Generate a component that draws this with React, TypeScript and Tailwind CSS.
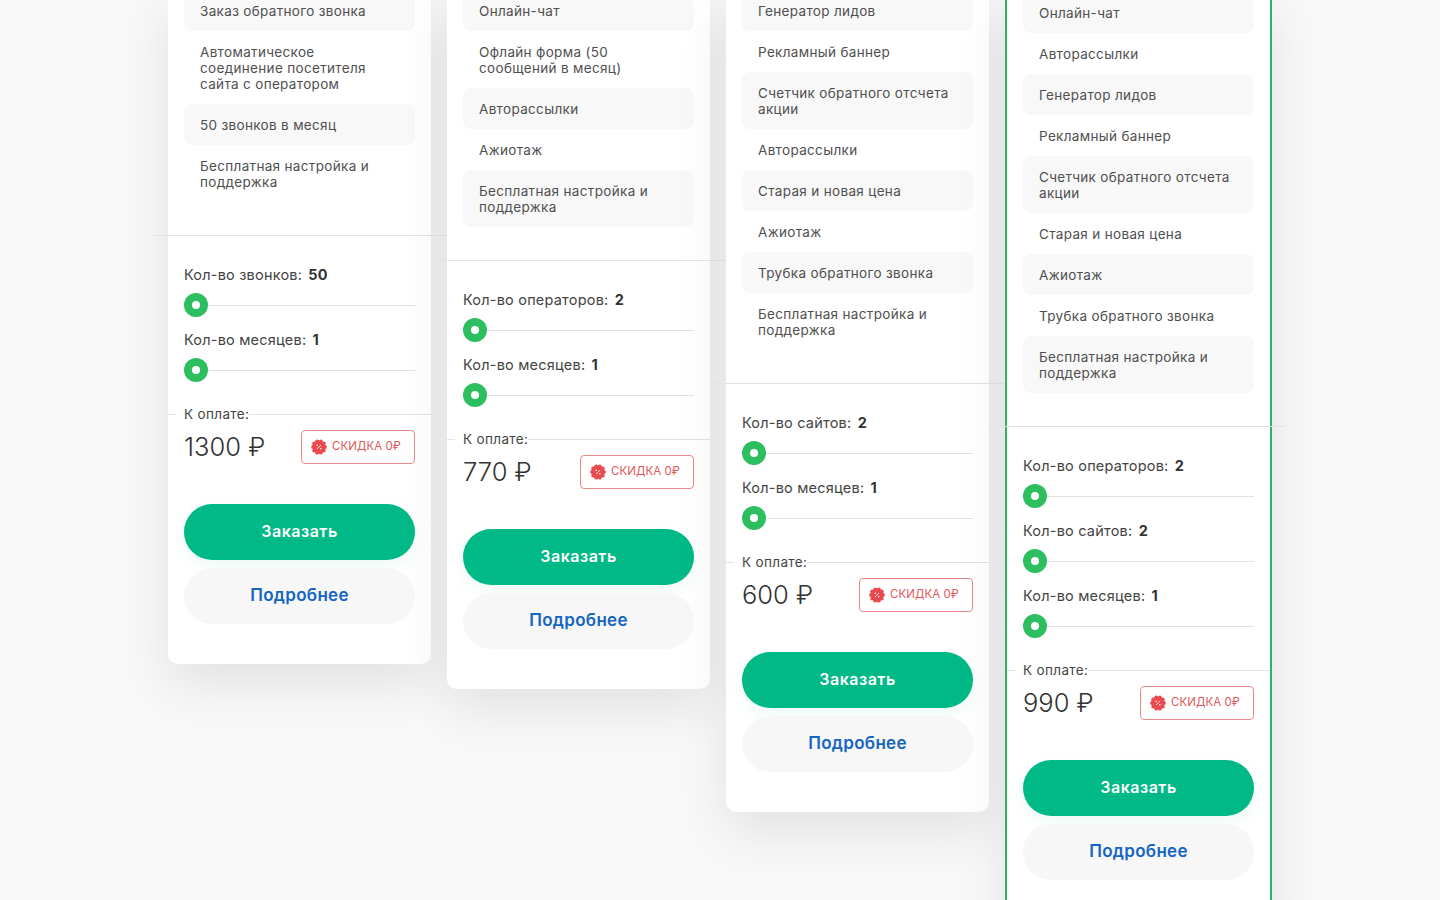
import React from "react";

type Plan = {
  items: string[];
  sliders: [string, string][];
  price: string;
  featured?: boolean;
};

const plans: Plan[] = [
  {
    items: [
      "Заказ обратного звонка",
      "Автоматическое\nсоединение посетителя\nсайта с оператором",
      "50 звонков в месяц",
      "Бесплатная настройка и\nподдержка",
    ],
    sliders: [["Кол-во звонков:", "50"], ["Кол-во месяцев:", "1"]],
    price: "1300 ₽",
  },
  {
    items: [
      "Онлайн-чат",
      "Офлайн форма (50\nсообщений в месяц)",
      "Авторассылки",
      "Ажиотаж",
      "Бесплатная настройка и\nподдержка",
    ],
    sliders: [["Кол-во операторов:", "2"], ["Кол-во месяцев:", "1"]],
    price: "770 ₽",
  },
  {
    items: [
      "Генератор лидов",
      "Рекламный баннер",
      "Счетчик обратного отсчета\nакции",
      "Авторассылки",
      "Старая и новая цена",
      "Ажиотаж",
      "Трубка обратного звонка",
      "Бесплатная настройка и\nподдержка",
    ],
    sliders: [["Кол-во сайтов:", "2"], ["Кол-во месяцев:", "1"]],
    price: "600 ₽",
  },
  {
    items: [
      "Онлайн-чат",
      "Авторассылки",
      "Генератор лидов",
      "Рекламный баннер",
      "Счетчик обратного отсчета\nакции",
      "Старая и новая цена",
      "Ажиотаж",
      "Трубка обратного звонка",
      "Бесплатная настройка и\nподдержка",
    ],
    sliders: [["Кол-во операторов:", "2"], ["Кол-во сайтов:", "2"], ["Кол-во месяцев:", "1"]],
    price: "990 ₽",
    featured: true,
  },
];

function DiscountIcon() {
  const bumps = Array.from({ length: 10 }, (_, i) => {
    const a = (i / 10) * Math.PI * 2;
    return { x: 8 + Math.cos(a) * 6, y: 8 + Math.sin(a) * 6 };
  });
  return (
    <svg width="16" height="16" viewBox="0 0 16 16" className="shrink-0">
      <circle cx="8" cy="8" r="6.4" fill="#ea4a4f" />
      {bumps.map((b, i) => (
        <circle key={i} cx={b.x} cy={b.y} r="1.9" fill="#ea4a4f" />
      ))}
      <path d="M10 6 6 10" stroke="#fff" strokeWidth="0.8" />
      <circle cx="6.2" cy="6.2" r="0.8" fill="#fff" />
      <circle cx="9.8" cy="9.8" r="0.8" fill="#fff" />
    </svg>
  );
}

function Slider({ label, value, first }: { label: string; value: string; first: boolean }) {
  return (
    <div className={first ? "" : "mt-[13px]"}>
      <div className="h-5 text-[14.5px] leading-5 tracking-[0.2px] text-[#444] whitespace-nowrap">
        {label} <b className="ml-[2px] font-bold text-[#333]">{value}</b>
      </div>
      <div className="mt-2 flex h-6 items-center">
        <div className="flex h-6 w-6 shrink-0 items-center justify-center rounded-full bg-[#2dbe60]">
          <div className="h-2 w-2 rounded-full bg-white" />
        </div>
        <div className="h-px flex-1 bg-[#e2e2e2]" />
      </div>
    </div>
  );
}

function Card({ plan }: { plan: Plan }) {
  return (
    <div
      className={
        "shrink-0 rounded-b-[10px] bg-white px-4 pb-10 shadow-[0_20px_50px_rgba(0,0,0,0.09)] " +
        (plan.featured ? "w-[267px] border-2 border-[#2fb35a]" : "w-[263px]")
      }
    >
      <div className="flex flex-col pb-[33px]">
        {plan.items.map((t, i) => (
          <div
            key={t}
            className={
              "whitespace-pre-line rounded-lg px-4 py-[12.5px] text-[13.5px] leading-4 tracking-[0.33px] text-[#4f4f4f] " +
              (i % 2 === 0 ? "bg-[#f8f8f8]" : "bg-white")
            }
          >
            {t}
          </div>
        ))}
      </div>

      <div className={"h-px bg-[#e3e3e3] " + (plan.featured ? "-ml-[33px] -mr-[31px]" : "-mx-[31px]")} />

      <div className="mt-[29px]">
        {plan.sliders.map(([l, v], i) => (
          <Slider key={l} label={l} value={v} first={i === 0} />
        ))}
      </div>

      <div className="-mx-4 mt-6 flex h-4 items-center">
        <div className="h-px w-2 bg-[#e3e3e3]" />
        <div className="pl-2 text-[13.5px] leading-4 tracking-[0.35px] text-[#444]">К оплате:</div>
        <div className="h-px flex-1 bg-[#e3e3e3]" />
      </div>

      <div className="mt-2 flex h-[34px] items-center justify-between">
        <div className="text-[25.5px] leading-8 font-light text-[#333]">{plan.price}</div>
        <div className="flex h-[34px] w-[114px] items-center gap-[5px] rounded-[4px] border border-[#e98a8a] bg-white pl-[9px]">
          <DiscountIcon />
          <span className="text-[11.5px] tracking-[0.05px] text-[#e0585c]">СКИДКА 0₽</span>
        </div>
      </div>

      <div className="mt-10 flex h-14 items-center justify-center rounded-[28px] bg-[#00b986] pb-[2px] text-[16px] font-semibold tracking-[0.5px] text-white shadow-[0_6px_16px_rgba(0,185,134,0.08)]">
        Заказать
      </div>
      <div className="mt-2 flex h-14 items-center justify-center rounded-[28px] bg-[#f7f7f8] text-[17px] font-semibold tracking-[0.3px] text-[#1565c0]">
        Подробнее
      </div>
    </div>
  );
}

export default function App() {
  return (
    <div className="h-[900px] overflow-hidden bg-[#f8f8f8] font-['Inter',sans-serif]">
      <div className="-mt-[10px] flex items-start justify-center gap-4">
        {plans.map((p) => (
          <Card key={p.price} plan={p} />
        ))}
      </div>
    </div>
  );
}
